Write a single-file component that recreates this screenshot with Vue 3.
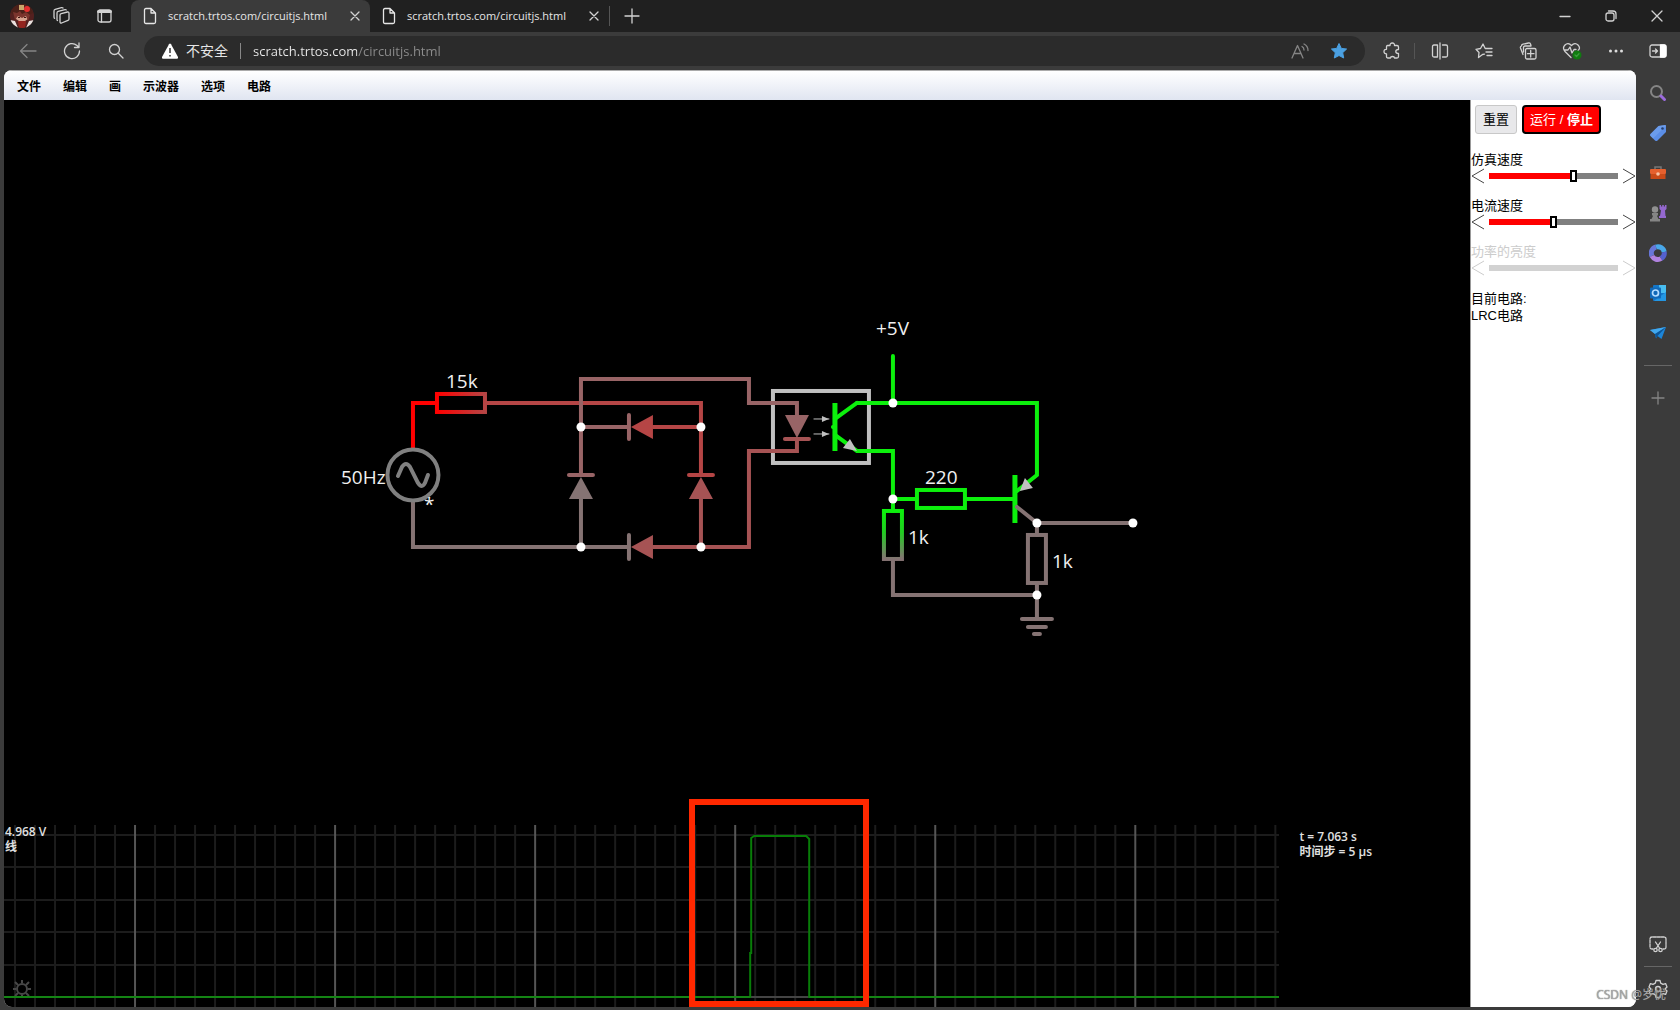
<script setup>
import { ref } from 'vue'

const tabs = [
  { title: 'scratch.trtos.com/circuitjs.html', active: true },
  { title: 'scratch.trtos.com/circuitjs.html', active: false },
]
const url = ref('scratch.trtos.com/circuitjs.html')
const menus = ['文件', '编辑', '画', '示波器', '选项', '电路']

const sliders = ref([
  { id: 'sim-speed', label: '仿真速度', value: 66, disabled: false },
  { id: 'current-speed', label: '电流速度', value: 50, disabled: false },
  { id: 'power-brightness', label: '功率的亮度', value: 0, disabled: true },
])

const gridX = Array.from({ length: 64 }, (_, i) => 15 + i * 20)
const gridY = [835, 867, 900, 932, 965, 997]
const isMajor = (x) => (x - 135) % 200 === 0

const wires = [
  { c: '#ff0000', d: 'M413 449V403H437' },
  { c: '#b54545', d: 'M487 403H701V475M653 427H701' },
  { c: '#857373', d: 'M413 501V547H629M581 547V499M629 535V559' },
  { c: '#986466', d: 'M581 475V379H749V403H797V417M581 427H629M629 415V439M569 475H593' },
  { c: '#b54545', d: 'M689 475H713' },
  { c: '#a65354', d: 'M701 499V547M653 547H749V451H797V439M785 439H809' },
]
const greens = [
  'M893 356V403M857 403H1037V475L1017 491',
  'M835 419L857 403M835 435L857 451H893V511M893 499H917M965 499H1015',
]
const dots = [
  [581, 427], [701, 427], [581, 547], [701, 547], [893, 403],
  [893, 499], [1037, 523], [1133, 523], [1037, 595],
]
const labels = [
  { x: 446, y: 388, t: '15k' },
  { x: 341, y: 484, t: '50Hz' },
  { x: 424, y: 511, t: '*' },
  { x: 876, y: 335, t: '+5V' },
  { x: 925, y: 484, t: '220' },
  { x: 908, y: 544, t: '1k' },
  { x: 1052, y: 568, t: '1k' },
]
</script>

<template>
  <div class="browser">
    <header class="titlebar">
      <button class="avatar" aria-label="profile">
        <svg width="26" height="26" viewBox="0 0 26 26">
          <defs><clipPath id="face"><circle cx="13" cy="13" r="12" /></clipPath></defs>
          <g clip-path="url(#face)">
            <rect width="26" height="26" fill="#54201f" />
            <path d="M2 10Q4 1 13 1T24 10L20 12H6z" fill="#4c2019" />
            <path d="M10 2h5v5h-5z" fill="#c9a76b" />
            <circle cx="18" cy="6" r="3" fill="#e53030" />
            <path d="M7 11H19V16L13 20 7 16z" fill="#d8a491" />
            <path d="M4 9l4 1 3-2 2 3 4-2 4 3-2 6-2-5-4 2-4-2-3 4z" fill="#7b342d" />
            <path d="M9 14h2v1H9zM15 14h2v1h-2z" fill="#3c1512" />
            <path d="M1 17l5 1 3 7H3zM25 17l-5 1-3 7h7z" fill="#e8e2df" />
            <path d="M9 18h8l-1 8h-6z" fill="#93241f" />
          </g>
        </svg>
      </button>
      <button class="icon-btn ws" aria-label="workspaces">
        <svg width="20" height="20" viewBox="0 0 20 20" class="line">
          <path d="M8 9.200Q8 8 9.200 7.700L15.500 6Q17 5.700 17 7.200V13Q17 14 16 14.300L9.600 17Q8 17.300 8 16zM5.500 14.500Q5 14.500 5 13.500V7Q5 5.700 6.200 5.400L13 3.600Q14 3.400 14.200 4M2.600 12.300Q2 12 2 11V5Q2 3.600 3.200 3.300L9.500 1.600Q10.500 1.400 11 2" />
        </svg>
      </button>
      <button class="icon-btn tabmenu" aria-label="tab actions">
        <svg width="16" height="16" viewBox="0 0 16 16" class="line">
          <rect x="2" y="2" width="13" height="12" rx="2" /><path d="M2.500 3.500H14.500" stroke-width="3" /><path d="M5.500 4V14" />
        </svg>
      </button>

      <nav class="tabs">
        <div v-for="(tab, i) in tabs" :key="i" class="tab" :class="{ active: tab.active }">
          <svg width="14" height="18" viewBox="0 0 14 18" class="line"><path d="M1.500 3Q1.500 1.500 3 1.500H8L12.500 6V15Q12.500 16.500 11 16.500H3Q1.500 16.500 1.500 15zM8 1.500V6H12.500" /></svg>
          <a href="#" class="tab-title">{{ tab.title }}</a>
          <button class="icon-btn" aria-label="close tab">
            <svg width="10" height="10" viewBox="0 0 10 10" class="line"><path d="M1 1L9 9M9 1L1 9" /></svg>
          </button>
        </div>
      </nav>
      <button class="icon-btn plus" aria-label="new tab">
        <svg width="16" height="16" viewBox="0 0 16 16" class="line"><path d="M8 1V15M1 8H15" /></svg>
      </button>

      <div class="window-controls">
        <button class="icon-btn" aria-label="minimize"><svg width="12" height="12" viewBox="0 0 12 12" class="line"><path d="M1 6.500H11" /></svg></button>
        <button class="icon-btn" aria-label="restore"><svg width="12" height="12" viewBox="0 0 12 12" class="line"><rect x="1" y="3" width="8" height="8" rx="2" /><path d="M3.500 1H8Q11 1 11 4V8.500" /></svg></button>
        <button class="icon-btn" aria-label="close"><svg width="12" height="12" viewBox="0 0 12 12" class="line"><path d="M1 1L11 11M11 1L1 11" /></svg></button>
      </div>
    </header>

    <div class="toolbar">
      <div class="nav-buttons">
        <button class="icon-btn dim" aria-label="back"><svg width="18" height="16" viewBox="0 0 18 16" class="line"><path d="M17 8H1.500M8 1.500L1.500 8L8 14.500" /></svg></button>
        <button class="icon-btn" aria-label="reload"><svg width="18" height="18" viewBox="0 0 18 18" class="line"><path d="M16.500 9A7.500 7.500 0 1 1 14 3.500L16 5.500M16 1V5.500H11.500" /></svg></button>
        <button class="icon-btn" aria-label="search"><svg width="16" height="16" viewBox="0 0 16 16" class="line"><circle cx="6.500" cy="6.500" r="5" /><path d="M10.300 10.300L15 15" /></svg></button>
      </div>
      <div class="address">
        <svg width="18" height="16" viewBox="0 0 18 16"><path d="M8 1.200Q9 0 10 1.200L17 14Q17.500 15.700 16 15.700H2Q.5 15.700 1 14z" fill="#fff" /><path d="M9 5V10M9 12V13.500" stroke="#333" stroke-width="1.500" /></svg>
        <label for="url" class="insecure">不安全</label>
        <span class="sep"></span>
        <input id="url" v-model="url" type="text" spellcheck="false" />
        <button class="icon-btn dim" aria-label="read aloud"><svg width="18" height="16" viewBox="0 0 18 16" class="line"><path d="M1 15L6.500 2.500L12 15M3 10.500H10M11 3.500Q13 4.500 13 7M13 1Q17 3 17 7.500" /></svg></button>
        <button class="icon-btn" aria-label="favorite"><svg width="16" height="16" viewBox="0 0 16 16"><path d="M8 .5L10.300 5.400 15.600 6 11.700 9.700 12.700 15 8 12.500 3.300 15 4.300 9.700 .4 6 5.700 5.400z" fill="#4ba0e1" stroke="#4ba0e1" stroke-linejoin="round" /></svg></button>
      </div>
      <div class="actions">
        <button class="icon-btn ext" aria-label="extensions"><svg width="18" height="18" viewBox="0 0 18 18" class="line"><path d="M4.500 3.500H7Q7 1 9.300 1T11.500 3.500H14Q15.500 3.500 15.500 5V7.500Q12.800 7.500 12.800 9.500T15.500 11.500V14.500Q15.500 16 14 16H11.500Q11.500 14.500 9.500 14.500T7.500 16H5Q3.500 16 3.500 14.500V11.800Q1 11.800 1 9.500T3.500 7.300V5Q3.500 3.500 4.500 3.500" /></svg></button>
        <span class="sep"></span>
        <button class="icon-btn" aria-label="split screen"><svg width="18" height="18" viewBox="0 0 18 18" class="line"><path d="M6.500 3H3Q1.500 3 1.500 4.500V13.500Q1.500 15 3 15H6.500V3M9 1V17M11.500 3H15Q16.500 3 16.500 4.500V13.500Q16.500 15 15 15H11.500" /></svg></button>
        <button class="icon-btn" aria-label="favorites"><svg width="18" height="18" viewBox="0 0 18 18" class="line"><path d="M9.500 12.200L7.500 12.500 3.500 15.500 4 10.500 1 7.300 5.500 6.500 8 2 10.200 6.500H17M11 10H17M12 13.500H17" /></svg></button>
        <button class="icon-btn" aria-label="collections"><svg width="18" height="18" viewBox="0 0 18 18" class="line"><path d="M4 12.500L1.500 6Q1 4.500 2.500 4Q2.500 2.500 4 2.200L9.500 1Q11 .8 11.500 2L12 3.500M4.500 10V5.500Q4.500 4 6 4H12" /><rect x="6.500" y="6.500" width="10.500" height="10.500" rx="1.500" /><path d="M11.700 8.500V15M8.500 11.700H15" /></svg></button>
        <button class="icon-btn" aria-label="performance"><svg width="20" height="18" viewBox="0 0 20 18" class="line"><path d="M9 15.500L3 9.500Q0 6 3 3T9.500 3.500Q13 0 16 3T16 8.500M2 8H6L8 5L10 11L12 7.500H14" /><circle cx="15" cy="13" r="4.500" fill="#107c10" stroke="none" /><path d="M13 13L14.500 14.500L17 11.700" stroke="#3c9b3c" /></svg></button>
        <button class="icon-btn" aria-label="more"><svg width="16" height="6" viewBox="0 0 16 6" fill="#ddd"><circle cx="2.500" cy="3" r="1.500" /><circle cx="8" cy="3" r="1.500" /><circle cx="13.500" cy="3" r="1.500" /></svg></button>
        <button class="icon-btn side" aria-label="sidebar"><svg width="18" height="14" viewBox="0 0 18 14" class="line"><rect x="1" y="1" width="16" height="12" rx="2" /><path d="M11.500 1H15Q17 1 17 3V11Q17 13 15 13H11.500z" fill="#fff" stroke="#fff" /><path d="M3.500 7H8.500M6.500 5L8.500 7L6.500 9" /></svg></button>
      </div>
    </div>

    <div class="workspace">
      <main class="page">
        <nav class="menubar"><button v-for="m in menus" :key="m" class="menu">{{ m }}</button></nav>
        <div class="sim">
          <section class="canvas">
            <svg class="circuit" viewBox="4 100 1466 725" preserveAspectRatio="xMinYMin meet">
              <defs>
                <linearGradient id="r1" gradientUnits="userSpaceOnUse" x1="437" y1="0" x2="485" y2="0"><stop offset="0" stop-color="#f00" /><stop offset="1" stop-color="#b54545" /></linearGradient>
                <linearGradient id="r2" gradientUnits="userSpaceOnUse" x1="0" y1="511" x2="0" y2="559"><stop offset="0" stop-color="#0cf00c" /><stop offset=".45" stop-color="#22cc22" /><stop offset="1" stop-color="#857373" /></linearGradient>
              </defs>
              <g fill="none" stroke-width="4" stroke-linecap="round">
                <rect x="773" y="391" width="96" height="72" stroke="#c0c0c0" />
                <path v-for="w in wires" :key="w.d" :d="w.d" :stroke="w.c" />
                <rect x="437" y="394" width="48" height="18" stroke="url(#r1)" />
                <circle cx="413" cy="475" r="25.500" stroke="#808080" />
                <path d="M398 476L402 467Q406 461 410 467L418 483Q422 489 425 483L428 475" stroke="#808080" />
                <g stroke="#0cf00c">
                  <path v-for="g in greens" :key="g" :d="g" />
                  <path d="M835 403V451M1015 475V523" stroke-width="5" stroke-linecap="butt" />
                  <path d="M833 427H835" />
                  <rect x="917" y="490" width="48" height="18" />
                </g>
                <rect x="884" y="511" width="18" height="48" stroke="url(#r2)" />
                <g stroke="#857373">
                  <path d="M1017 507L1037 523H1133M1037 523V535M893 561V595H1037M1037 583V619M1022 619H1052M1028 627H1046M1034 634H1040" />
                  <rect x="1028" y="535" width="18" height="48" />
                </g>
                <path d="M814 419H829M814 434H829" stroke="#c0c0c0" stroke-width="1" />
              </g>
              <path d="M631 427L653 415V439z" fill="#b54545" />
              <path d="M631 547L653 535V559zM701 477L689 499H713z" fill="#a65354" />
              <path d="M581 477L569 499H593z" fill="#857373" />
              <path d="M797 438L785 415H809z" fill="#986466" />
              <path d="M829 419L822 416V422zM829 434L822 431V437zM857 451L850 439L843 448zM1020 491L1025 478L1033 488z" fill="#c0c0c0" />
              <circle v-for="(p, i) in dots" :key="i" :cx="p[0]" :cy="p[1]" r="4.500" fill="#fff" />
              <text v-for="l in labels" :key="l.x" :x="l.x" :y="l.y" class="label">{{ l.t }}</text>
            </svg>

            <div class="scope-row">
              <div class="scope">
                <svg viewBox="4 825 1275 182" preserveAspectRatio="xMinYMin meet">
                  <path v-for="y in gridY" :key="y" :d="`M4 ${y}H1279`" stroke="#1c1c1c" stroke-width="2" />
                  <path v-for="x in gridX" :key="x" :d="`M${x} 825V1007`" :stroke="isMajor(x) ? '#555' : '#1c1c1c'" stroke-width="2" />
                  <g fill="none" stroke="#474747" stroke-width="2">
                    <circle cx="22" cy="989" r="5" />
                    <path d="M22 983V980M22 995V998M16 989H13M28 989H31M18 985L15 982M26 985L29 982M18 993L15 996M26 993L29 996" />
                  </g>
                  <path d="M750 997H809" stroke="#444" stroke-width="2" />
                  <path d="M4 997H750V953H751V838L754 836H806L809 839V997H1279" fill="none" stroke="#087d08" stroke-width="2" />
                  <path d="M4 997H750M809 997H1279" stroke="#208c20" stroke-width="1" />
                  <text x="5" y="836" class="small">4.968 V</text>
                  <text x="5" y="851" class="small">线</text>
                </svg>
                <div class="highlight"></div>
              </div>
              <div class="readout">
                <p>t = 7.063 s</p>
                <p>时间步 = 5 μs</p>
              </div>
            </div>
          </section>

          <aside class="panel">
            <div class="buttons">
              <button class="reset">重置</button>
              <button class="run">运行 / <b>停止</b></button>
            </div>
            <div v-for="s in sliders" :key="s.id" class="control" :class="{ disabled: s.disabled }">
              <label :for="s.id">{{ s.label }}</label>
              <div class="slider">
                <button :disabled="s.disabled" aria-label="decrease" @click="s.value--"><svg width="14" height="16" viewBox="0 0 14 16"><path d="M13 1L1 8L13 15" /></svg></button>
                <input :id="s.id" v-model.number="s.value" type="range" min="0" max="100" :disabled="s.disabled" :style="{ '--fill': s.value + '%' }" />
                <button :disabled="s.disabled" aria-label="increase" @click="s.value++"><svg width="14" height="16" viewBox="0 0 14 16"><path d="M1 1L13 8L1 15" /></svg></button>
              </div>
            </div>
            <p class="current">目前电路:<br />LRC电路</p>
          </aside>
        </div>
      </main>

      <aside class="sidebar">
        <button class="icon-btn" aria-label="search"><svg width="18" height="18" viewBox="0 0 18 18"><circle cx="7.500" cy="7.500" r="5.500" fill="none" stroke="#858585" stroke-width="2" /><path d="M12 12L15.500 15.500" stroke="#9b6bdc" stroke-width="3" stroke-linecap="round" /></svg></button>
        <button class="icon-btn" aria-label="shopping"><svg width="18" height="18" viewBox="0 0 18 18"><path d="M9.500 2L16 1Q17 1 17 2V8L8.500 16.500Q7.500 17.500 6 16.500L1.500 12Q.5 11 1.500 10z" fill="#5b8ee6" /><path d="M9.500 2L16 1Q17 1 17 2L4 14.500 1.500 12Q.5 11 1.500 10z" fill="#77a5ee" opacity=".6" /><circle cx="13.500" cy="4.500" r="1.300" fill="#223e70" /></svg></button>
        <button class="icon-btn" aria-label="tools"><svg width="18" height="16" viewBox="0 0 18 16"><path d="M6 4V2H12V4" fill="none" stroke="#777" stroke-width="1.500" /><rect x="1" y="4" width="16" height="5" rx="1" fill="#e5602e" /><path d="M1.500 9H16.500V14H1.500z" fill="#c94a18" /><circle cx="9" cy="9" r="1.800" fill="#f5c3a6" /></svg></button>
        <button class="icon-btn" aria-label="games"><svg width="18" height="18" viewBox="0 0 18 18"><path d="M10.500 1H12V2.500H13.200V1H14.800V2.500H16V1H17.500V5L16 6.500 16.500 12H17V14H10V12H11L12 6.500 10.500 5z" fill="#9468cf" /><circle cx="6" cy="5.500" r="3.200" fill="#909090" /><path d="M3 9H9V11L8 12 9.500 15H11V17.500H1V15H2.500L4 12 3 11z" fill="#858585" /></svg></button>
        <button class="icon-btn" aria-label="microsoft 365"><svg width="18" height="18" viewBox="0 0 18 18" fill="none" stroke-width="5"><path d="M3 12A6.300 6.300 0 0 1 7 3" stroke="#6876d8" /><path d="M7 3A6.300 6.300 0 0 1 15.200 8" stroke="#49a8ea" /><path d="M15.200 8A6.300 6.300 0 0 1 12 14.500" stroke="#5461cf" /><path d="M12 14.500A6.300 6.300 0 0 1 3 12" stroke="#b082df" /></svg></button>
        <button class="icon-btn" aria-label="outlook"><svg width="18" height="18" viewBox="0 0 18 18"><rect x="4" y="1" width="13" height="16" rx="1" fill="#1476c8" /><path d="M10 1H17V9H10z" fill="#48bdf0" /><path d="M17 8V17H5z" fill="#2496e2" /><rect x="1" y="3.500" width="11" height="11" rx="1" fill="#1068b8" /><circle cx="6.500" cy="9" r="3" fill="none" stroke="#b4dcff" stroke-width="1.700" /></svg></button>
        <button class="icon-btn" aria-label="drop"><svg width="18" height="14" viewBox="0 0 18 14"><path d="M1 4L17 1 12.500 13 8.500 10 7 12.500 6 8z" fill="#1c85d8" /><path d="M1 4L17 1 6 8z" fill="#42a8ed" /><path d="M6 8L17 1 8.500 10 7 12.500z" fill="#0c5597" /></svg></button>
        <hr />
        <button class="icon-btn dim" aria-label="add"><svg width="14" height="14" viewBox="0 0 14 14" class="line"><path d="M7 1V13M1 7H13" /></svg></button>
        <div class="spacer"></div>
        <button class="icon-btn" aria-label="screenshot"><svg width="20" height="18" viewBox="0 0 20 18" class="line"><path d="M5 14H4Q2 14 2 12V4Q2 2 4 2H16Q18 2 18 4V12Q18 14 16 14H15" stroke-dasharray="3 1" /><path d="M7.500 7L11.500 13M12.500 7L8.500 13" /><circle cx="7.500" cy="15" r="1.700" /><circle cx="12.500" cy="15" r="1.700" /></svg></button>
        <hr />
        <button class="icon-btn gear" aria-label="settings"><svg width="20" height="20" viewBox="0 0 20 20" class="line"><path d="M8 1.500H12L12.700 4.200 15 5.400 17.600 4.600 19 8 17 10 19 12 17.600 15.400 15 14.600 12.700 15.800 12 18.500H8L7.300 15.800 5 14.600 2.400 15.400 1 12 3 10 1 8 2.400 4.600 5 5.400 7.300 4.200z" /><circle cx="10" cy="10" r="2.500" /></svg></button>
      </aside>
    </div>
    <span class="watermark">CSDN @岁忧</span>
  </div>
</template>

<style>
body { margin: 0; overflow: hidden; background: #3b3b3b; }
</style>

<style scoped>
* { box-sizing: border-box; }
.browser {
  position: relative; display: flex; flex-direction: column; height: 100vh;
  background: #3b3b3b; color: #e6e6e6;
  font: 12px/16px "Open Sans", "Noto Sans CJK SC", sans-serif;
}
button { border: 0; padding: 0; background: none; color: inherit; font: inherit; }
a { color: inherit; text-decoration: none; }
p { margin: 0; }
svg { display: block; }
.line { fill: none; stroke: currentColor; stroke-width: 1.3; stroke-linecap: round; stroke-linejoin: round; }
.icon-btn { display: flex; align-items: center; justify-content: center; flex: none; color: #d2d2d2; }
.dim { color: #858585; }
.sep { width: 1px; height: 16px; background: #666; flex: none; }

.titlebar { display: flex; align-items: center; height: 32px; background: #202020; }
.avatar { margin-left: 9px; }
.ws { width: 40px; margin-left: 7px; }
.tabmenu { width: 40px; margin-left: 2px; }
.tabs { display: flex; align-self: stretch; margin-left: 7px; }
.tab { display: flex; align-items: center; width: 239px; padding: 0 10px 0 12px; }
.tab.active { background: #3b3b3b; border-radius: 8px 8px 0 0; }
.tab-title { flex: 1; margin-left: 11px; font-size: 11px; white-space: nowrap; }
.plus { width: 44px; height: 20px; border-left: 1px solid #555; }
.window-controls { display: flex; margin-left: auto; }
.window-controls .icon-btn { width: 46px; }

.toolbar { display: flex; align-items: center; height: 38px; }
.nav-buttons { display: flex; padding: 0 6px; }
.nav-buttons .icon-btn { width: 44px; }
.address {
  display: flex; align-items: center; flex: 1; height: 30px;
  padding: 0 18px 0 17px; border-radius: 15px; background: #2b2b2b;
}
.insecure { margin: 0 12px 0 7px; font-size: 14px; }
.address .sep { background: #888; }
.address input {
  flex: 1; height: 24px; margin-left: 12px; padding: 0; border: 0; outline: 0;
  font: inherit; font-size: 13px; color: transparent;
  background: linear-gradient(90deg, #eee 104px, #8d8d8d 104px); background-clip: text;
}
.address .icon-btn { margin-left: 22px; }
.actions { display: flex; align-items: center; padding-left: 6px; }
.actions .icon-btn { width: 44px; }
.actions .ext { width: 42px; }
.actions .side { margin-left: -2px; }
.actions .sep { margin: 0 3px 0 1px; background: #555; }

.workspace { display: flex; flex: 1; min-height: 0; padding: 0 0 3px 4px; }
.page { display: flex; flex-direction: column; flex: 1; min-width: 0; overflow: hidden; border-radius: 8px; background: #fff; }
.menubar {
  display: flex; align-items: center; gap: 22px; height: 30px; padding: 3px 13px 0;
  border-top: 1px solid #aaa; background: linear-gradient(#fff, #e0e5f1);
  color: #000; font-weight: 700;
}
.sim { display: flex; flex: 1; min-height: 0; }
.canvas { display: flex; flex-direction: column; justify-content: space-between; flex: 1; min-width: 0; background: #000; color: #f0f0f0; }
.circuit { width: 100%; min-height: 0; }
.label { font-size: 19px; fill: #f0f0f0; }
.small { font-size: 12px; font-weight: 600; fill: #e0e0e0; }
.scope-row { display: flex; }
.scope { position: relative; flex: 0 0 87%; }
.scope svg { width: 100%; }
.highlight { position: absolute; left: 53.7%; right: 32.2%; top: -26px; bottom: 0; border: 6px solid #ff2800; }
.readout { padding: 4px 0 0 20px; font-weight: 600; line-height: 15px; color: #e0e0e0; white-space: nowrap; }

.panel {
  width: 166px; border-left: 1px solid #999; color: #000; background: #fff;
  font-family: "Liberation Sans", "Noto Sans CJK SC", sans-serif; font-size: 13px;
}
.buttons { display: flex; gap: 5px; height: 52px; padding: 5px 4px 18px; }
.reset { width: 42px; border: 1px solid #c8c8c8; border-radius: 3px; background: #e8e8ea; }
.run { width: 79px; border: 2px solid #000; border-radius: 4px; background: #f00; color: #fff; white-space: nowrap; }
.control { height: 46px; }
.control label { display: block; line-height: 16px; }
.slider { display: flex; align-items: center; height: 16px; }
.slider button { width: 18px; flex: none; }
.slider path { fill: none; stroke: #444; stroke-width: 1; }
.slider button:last-child { display: flex; justify-content: flex-end; }
.slider input { flex: 1; min-width: 0; height: 16px; margin: 0; appearance: none; background: none; }
.slider input::-webkit-slider-runnable-track { height: 6px; background: linear-gradient(90deg, #f00 var(--fill), #808080 var(--fill)); }
.slider input::-webkit-slider-thumb { appearance: none; width: 7px; height: 12px; margin-top: -3px; border: 2px solid #000; background: #fff; }
.disabled { color: #ccc; }
.disabled path { stroke: #ccc; }
.disabled input::-webkit-slider-runnable-track { background: #d2d2d2; }
.disabled input::-webkit-slider-thumb { visibility: hidden; }
.current { line-height: 17px; }

.sidebar { display: flex; flex-direction: column; align-items: center; width: 44px; padding: 3px 0 0; }
.sidebar .icon-btn { width: 40px; height: 40px; }
.sidebar .gear { height: 36px; }
.sidebar hr { width: 28px; height: 1px; margin: 12px 0; border: 0; background: #666; }
.spacer { flex: 1; }
.sidebar .spacer ~ hr { margin: 2px 0 4px; }
.watermark {
  position: absolute; right: 14px; bottom: 7px; color: #aaa;
  text-shadow: 0 0 1px #555;
}
</style>
